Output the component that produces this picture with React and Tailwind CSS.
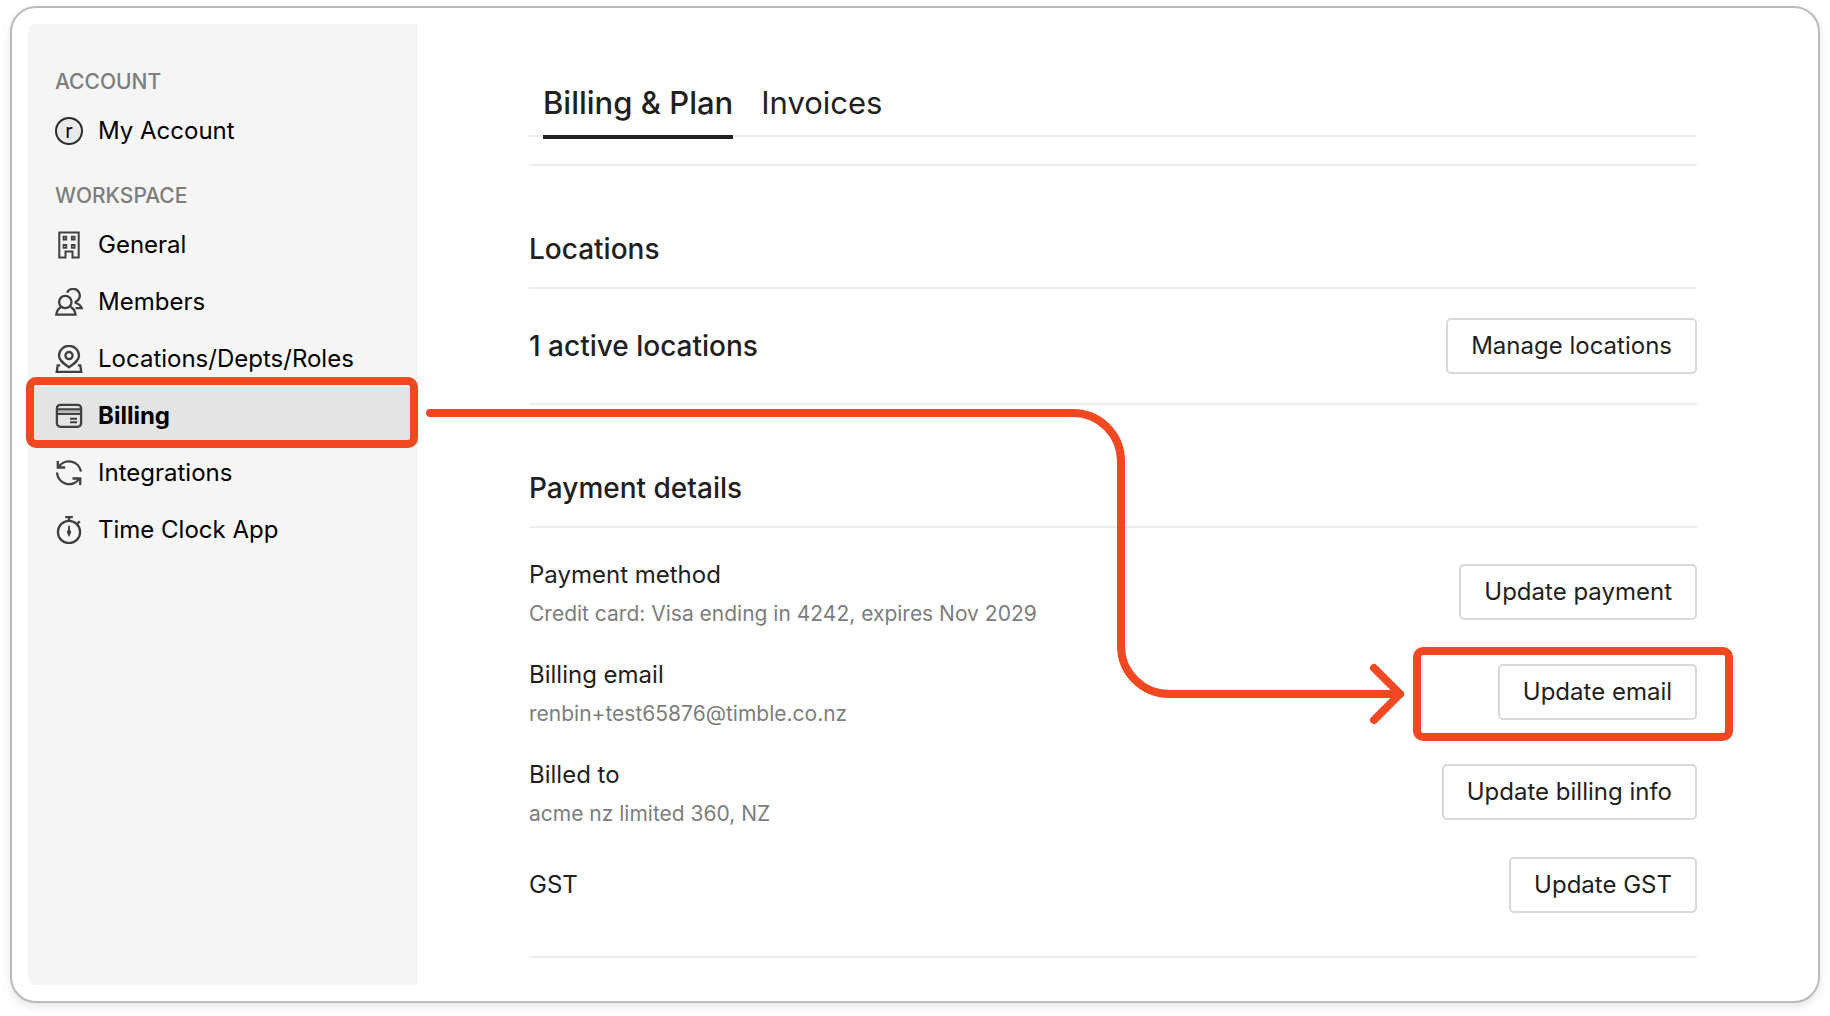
import { useState } from "react";

function NavIcon({ children }) {
  return (
    <svg
      width="28"
      height="28"
      viewBox="0 0 28 28"
      fill="none"
      stroke="#3f4140"
      strokeWidth="2.3"
      className="shrink-0"
      aria-hidden="true"
    >
      {children}
    </svg>
  );
}

const BuildingIcon = () => (
  <NavIcon>
    <path d="M4.3 1.6h19.4v24.8h-6.2v-5.8h-7v5.8H4.3z" strokeWidth="2" />
    <path
      d="M8.5 5.7h2.8v2.8H8.5zM16.8 5.7h2.8v2.8h-2.8zM8.5 14h2.8v2.8H8.5zM16.8 14h2.8v2.8h-2.8z"
      strokeWidth="1.8"
    />
  </NavIcon>
);

const MembersIcon = () => (
  <NavIcon>
    <circle cx="10.3" cy="14" r="6.2" />
    <path d="M6.2 19C3.5 20.5 1.6 23 1.3 26.7h19.2c-.3-3.7-2.2-6.2-4.9-7.7" />
    <path d="M12 4.8A6.7 6.7 0 1 1 20.7 13.7v1.3c3 .9 5.2 2.7 6 5.2h-6.2" />
  </NavIcon>
);

const PinIcon = () => (
  <NavIcon>
    <path d="M14 22.3C8 18.2 4 15.2 4 10.8a10 10 0 0 1 20 0c0 4.4-4 7.4-10 11.5z" />
    <circle cx="14" cy="10.6" r="3.6" />
    <path d="M5.2 20.3H2.7L1.7 27h24.6l-1-6.7h-2.5" />
  </NavIcon>
);

const CardIcon = () => (
  <NavIcon>
    <path d="M2 7.5h24v4.5H2z" fill="#b9b9b9" stroke="none" />
    <rect x="1.9" y="2.8" width="24.2" height="22" rx="3.5" />
    <path d="M2 7.3h24M2 12h24" strokeWidth="2" />
    <path d="M15 16.7h7M15 20.3h7" strokeWidth="2" />
  </NavIcon>
);

const SyncIcon = () => (
  <NavIcon>
    <path d="M26 12.5A12.2 12.2 0 0 0 3.5 8.5" />
    <path d="M2.8 2v6.5h7.4" />
    <path d="M2 13.5a12.2 12.2 0 0 0 22.5 6" />
    <path d="M25.2 26v-6.5h-7.7" />
  </NavIcon>
);

const StopwatchIcon = () => (
  <NavIcon>
    <circle cx="14" cy="16" r="11.1" />
    <path d="M10.2 1.2h7.6M14 1.5v3.5M22.5 7.5l2.3-2.3" />
    <path d="M14 9.8v5" strokeWidth="1.8" />
    <path d="M14 13l1.6 3-1.6 3.8-1.6-3.8z" strokeWidth="1.2" fill="#3f4140" />
  </NavIcon>
);

const workspaceLinks = [
  { label: "General", icon: BuildingIcon },
  { label: "Members", icon: MembersIcon },
  { label: "Locations/Depts/Roles", icon: PinIcon },
  { label: "Billing", icon: CardIcon, active: true },
  { label: "Integrations", icon: SyncIcon },
  { label: "Time Clock App", icon: StopwatchIcon },
];

const paymentRows = [
  {
    label: "Payment method",
    detail: "Credit card: Visa ending in 4242, expires Nov 2029",
    action: "Update payment",
  },
  {
    label: "Billing email",
    detail: "renbin+test65876@timble.co.nz",
    action: "Update email",
    highlighted: true,
  },
  {
    label: "Billed to",
    detail: "acme nz limited 360, NZ",
    action: "Update billing info",
  },
];

// Leads the eye from the Billing link to the Update email button
function GuideArrow() {
  return (
    <svg
      width="982"
      height="320"
      viewBox="0 0 982 320"
      fill="none"
      stroke="#f24822"
      strokeWidth="8"
      strokeLinecap="round"
      strokeLinejoin="round"
      className="pointer-events-none absolute left-full top-5 z-10 ml-2"
      aria-hidden="true"
    >
      <path d="M4 6h643a48 48 0 0 1 48 48v185a48 48 0 0 0 48 48h231" />
      <path d="M948 261l26 26-26 26" />
    </svg>
  );
}

function NavLink({ icon: Icon, label, active }) {
  return (
    <li className="relative">
      <a
        href="#"
        aria-current={active ? "page" : undefined}
        className={
          active
            ? "flex h-[57px] items-center gap-[15px] bg-[#e4e4e4] pl-[27px] font-bold"
            : "flex h-[57px] items-center gap-[15px] pl-[27px]"
        }
      >
        <Icon />
        {label}
      </a>
      {active && (
        <>
          <div className="pointer-events-none absolute -top-2.5 right-0 -bottom-1 -left-0.5 rounded-[10px] border-8 border-[#f24822]" />
          <GuideArrow />
        </>
      )}
    </li>
  );
}

function ActionButton({ children }) {
  return (
    <button className="h-14 shrink-0 rounded-[5px] border-2 border-[#d9d9d9] bg-white px-[23px] text-[24px] hover:bg-gray-50">
      {children}
    </button>
  );
}

function Avatar() {
  return (
    <span className="flex size-7 shrink-0 items-center justify-center rounded-full border-2 border-[#2a2c2b] bg-[#e9e9e9] text-[20px]">
      r
    </span>
  );
}

export default function App() {
  const [tab, setTab] = useState("Billing & Plan");

  return (
    <div className="min-h-screen bg-white px-2.5 pt-1.5 pb-3.5 font-['Inter',sans-serif] text-[#1f2120]">
      <div className="flex rounded-[26px] border-2 border-[#bbbbbb] bg-white py-4 pl-4 shadow-[0_4px_10px_rgba(0,0,0,0.1)]">
        <nav className="w-[390px] shrink-0 rounded-l-lg bg-[#f5f5f5] pt-[42px] text-[24px] text-black">
          <h2 className="pl-[27px] text-[21px] leading-8 font-medium text-[#7d7d7d]">
            ACCOUNT
          </h2>
          <ul className="pt-1">
            <NavLink icon={Avatar} label="My Account" />
          </ul>
          <h2 className="pt-[21px] pl-[27px] text-[21px] leading-8 font-medium text-[#7d7d7d]">
            WORKSPACE
          </h2>
          <ul className="pt-1">
            {workspaceLinks.map((link) => (
              <NavLink key={link.label} {...link} />
            ))}
          </ul>
        </nav>

        <main className="min-w-0 flex-1 pt-14 pr-[121px] pb-[27px] pl-[111px]">
          <div className="flex h-[57px] gap-7 border-b-2 border-[#ededed] px-3.5">
            {["Billing & Plan", "Invoices"].map((name) => (
              <button
                key={name}
                onClick={() => setTab(name)}
                className={
                  tab === name
                    ? "-mb-1 border-b-4 border-[#1f2423] pb-3 text-[31px] font-medium"
                    : "-mb-1 border-b-4 border-transparent pb-3 text-[31px]"
                }
              >
                {name}
              </button>
            ))}
          </div>

          <section className="mt-[27px] border-y-2 border-[#ededed]">
            <h2 className="border-b-2 border-[#ededed] pt-[65px] pb-5 text-[28px] leading-9 font-medium">
              Locations
            </h2>
            <div className="flex items-center justify-between py-[29px]">
              <p className="text-[28px] leading-9 font-medium">
                1 active locations
              </p>
              <ActionButton>Manage locations</ActionButton>
            </div>
          </section>

          <section className="border-b-2 border-[#ededed] pb-7">
            <h2 className="border-b-2 border-[#ededed] pt-[65px] pb-5 text-[28px] leading-9 font-medium">
              Payment details
            </h2>
            <div className="pt-3.5">
              {paymentRows.map((row) => (
                <div
                  key={row.label}
                  className="relative flex h-[100px] items-center justify-between"
                >
                  <div className="pt-[5px]">
                    <p className="text-[24px] leading-9">{row.label}</p>
                    <p className="mt-[3px] text-[21px] leading-9 text-[#7d7d7d]">
                      {row.detail}
                    </p>
                  </div>
                  <ActionButton>{row.action}</ActionButton>
                  {row.highlighted && (
                    <div className="pointer-events-none absolute top-[5px] -right-9 h-[94px] w-80 rounded-[10px] border-8 border-[#f24822]" />
                  )}
                </div>
              ))}
              <div className="flex h-[86px] items-center justify-between">
                <p className="text-[24px] leading-9">GST</p>
                <ActionButton>Update GST</ActionButton>
              </div>
            </div>
          </section>
        </main>
      </div>
    </div>
  );
}
